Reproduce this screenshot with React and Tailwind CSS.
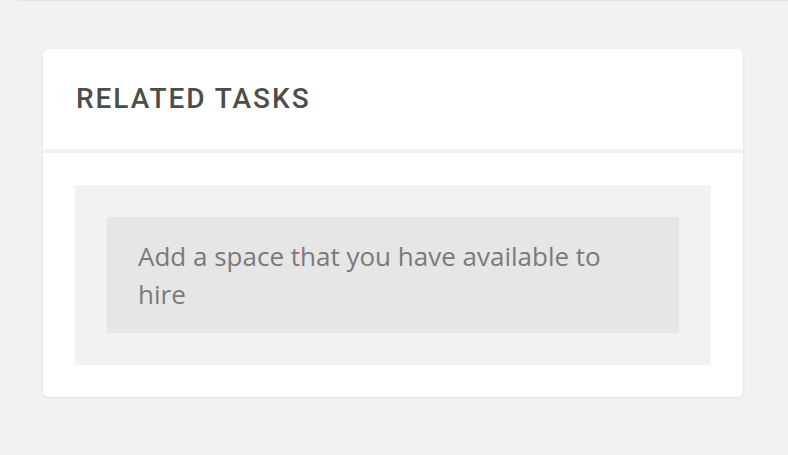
import React from "react";

export default function App() {
  return (
    <div className="min-h-[455px] w-[788px] bg-[#f2f2f2] relative overflow-hidden">
      {/* bottom edge of the previous section */}
      <div className="ml-[18px] h-px bg-[#e3e3e3]" />

      <div className="ml-[43px] mt-[48px] w-[700px] rounded-md bg-white shadow-[0_1px_3px_rgba(0,0,0,0.08)]">
        <div className="h-[104px] flex items-center px-[33px] border-b-4 border-[#f2f2f2]">
          <h2 className="font-['Roboto',sans-serif] text-[28px] font-medium tracking-[0.07em] text-[#4d4d4d] leading-none">
            RELATED TASKS
          </h2>
        </div>

        <div className="p-[32px]">
          <div className="bg-[#f2f2f2] p-[32px]">
            <div className="bg-[#e6e6e6] px-[31px] py-[20px]">
              <p className="font-['Open_Sans',sans-serif] text-[26px] leading-[38px] text-[#7a7a7a]">
                Add a space that you have available to hire
              </p>
            </div>
          </div>
        </div>
      </div>
    </div>
  );
}
